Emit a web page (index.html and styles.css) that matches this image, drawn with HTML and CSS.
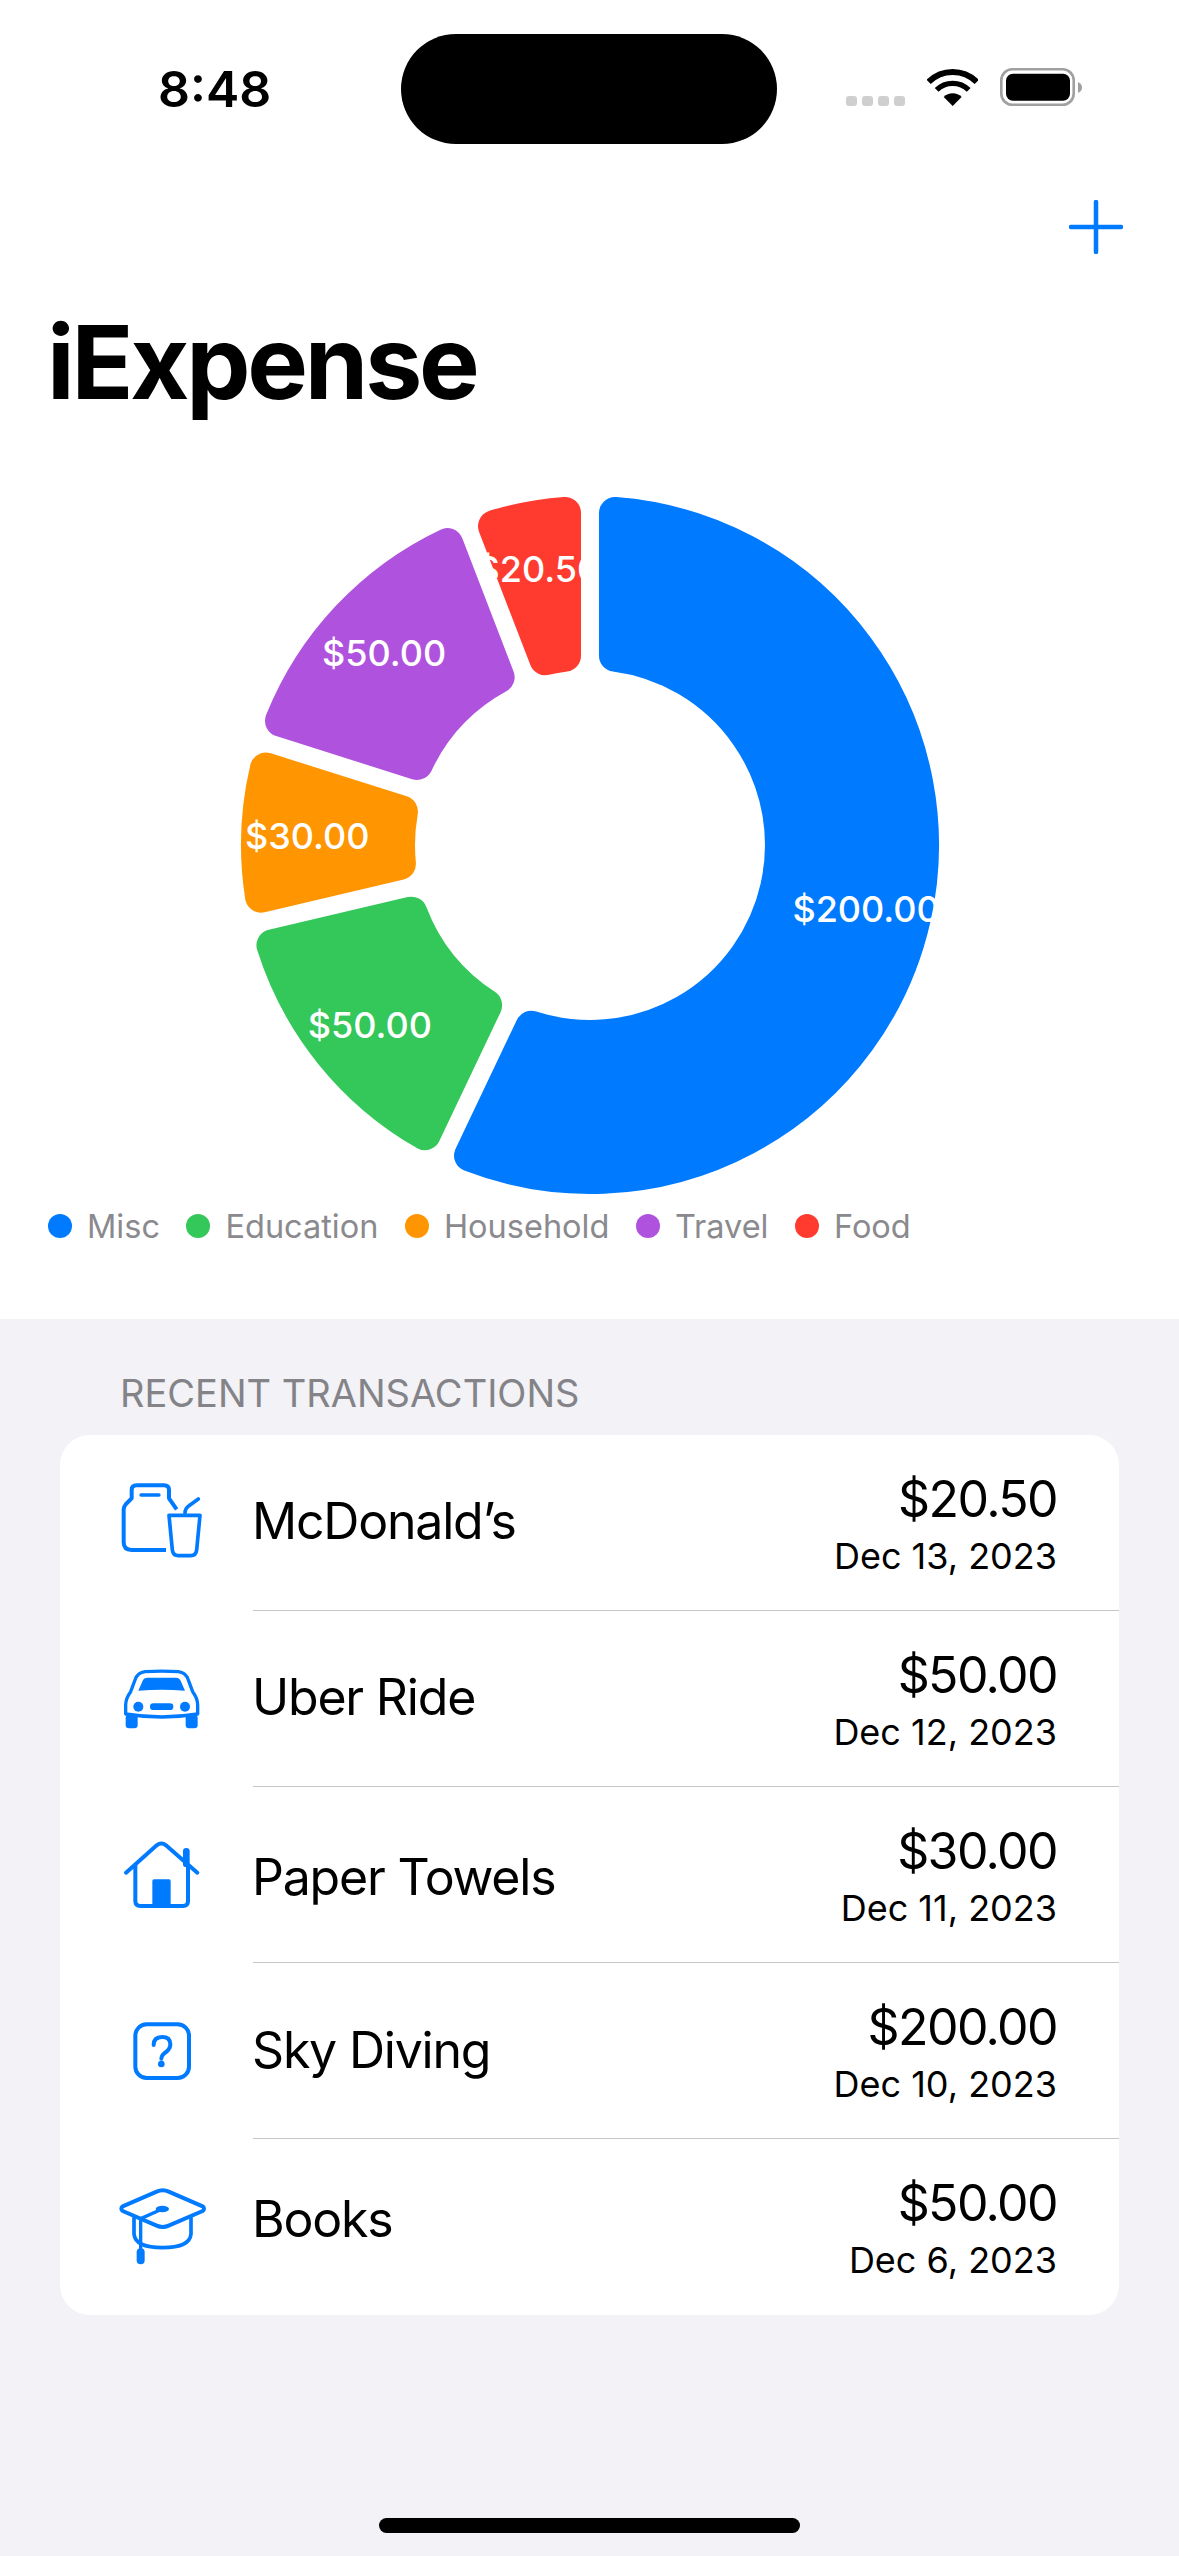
FILE: index.html
```html
<!DOCTYPE html>
<html>
<head>
<meta charset="utf-8">
<title>iExpense</title>
<link rel="stylesheet" href="styles.css">
</head>
<body>
  <div id="page">
    <div class="top">
      <div class="status">
        <span class="time">8:48</span>
        <div class="island"></div>
        <div class="status-icons">
          <div class="signal"><i></i><i></i><i></i><i></i></div>
          <svg class="wifi" viewBox="378 87 153 111">
            <path d="M382.9 125.9A102 102 0 0 1 527.1 125.9" fill="none" stroke="#000" stroke-width="18"/>
            <path d="M406.9 149.9A68 68 0 0 1 503.1 149.9" fill="none" stroke="#000" stroke-width="16"/>
            <path d="M455 198L428.1 171.1A38 38 0 0 1 481.9 171.1Z" fill="#000"/>
          </svg>
          <svg class="battery" viewBox="0 0 82 38">
            <rect x="1.3" y="1.3" width="72.4" height="35.4" rx="11" fill="none" stroke="#a0a0a0" stroke-width="2.6"/>
            <rect x="6" y="5.7" width="64" height="27" rx="7" fill="#000"/>
            <path d="M78 14C81 15.500 82 17 82 19.500C82 22 81 23.500 78 25Z" fill="#a0a0a0"/>
          </svg>
        </div>
      </div>

      <div class="nav">
        <svg class="plus" viewBox="0 0 54 54">
          <path d="M27 2V52M2 27H52" fill="none" stroke="#007aff" stroke-width="4.500" stroke-linecap="round"/>
        </svg>
      </div>

      <h1 class="title">iExpense</h1>

      <svg class="donut" viewBox="-590 -360 1179 720">
        <path class="slice misc" d="M25 -332.06A333 333 0 1 1 -119.96 310.64L-58.7 181.76A191 191 0 1 0 25 -189.36Z"/>
        <path class="slice education" d="M-165.12 289.18A333 333 0 0 1 -317.54 100.29L-178.61 67.66A191 191 0 0 0 -103.88 160.28Z"/>
        <path class="slice household" d="M-328.97 51.63A333 333 0 0 1 -324.09 -76.51L-188.06 -33.39A191 191 0 0 0 -190.05 18.98Z"/>
        <path class="slice travel" d="M-308.98 -124.18A333 333 0 0 1 -142.64 -300.91L-91.37 -167.73A191 191 0 0 0 -172.95 -81.05Z"/>
        <path class="slice food" d="M-95.97 -318.87A333 333 0 0 1 -25 -332.06L-25 -189.36A191 191 0 0 0 -44.7 -185.7Z"/>
        <text class="slice-label" x="276.1" y="64.3">$200.00</text>
        <text class="slice-label" x="-220.2" y="179.8">$50.00</text>
        <text class="slice-label" x="-282.8" y="-8.8">$30.00</text>
        <text class="slice-label" x="-205.9" y="-192.1">$50.00</text>
        <text class="slice-label" x="-51.7" y="-276.2">$20.50</text>
      </svg>

      <div class="legend">
        <div class="legend-item"><span class="dot bg-misc"></span>Misc</div>
        <div class="legend-item"><span class="dot bg-education"></span>Education</div>
        <div class="legend-item"><span class="dot bg-household"></span>Household</div>
        <div class="legend-item"><span class="dot bg-travel"></span>Travel</div>
        <div class="legend-item"><span class="dot bg-food"></span>Food</div>
      </div>
    </div>

    <div class="recent">
      <div class="recent-header">RECENT TRANSACTIONS</div>

      <div class="card">
        <div class="row">
          <svg class="icon" viewBox="6 9 420 420">
            <path d="M228 300H125Q101 300 101 277V178Q101 170 108 162L125 145V120Q125 106 140 106H222Q237 106 237 120V145L260 178" fill="none" stroke="#007aff" stroke-width="12" stroke-linejoin="round"/>
            <path d="M153 135H207" fill="none" stroke="#007aff" stroke-width="10" stroke-linecap="round"/>
            <path d="M237 196H330L320 300Q318 317 302 317H265Q249 317 247 300Z" fill="none" stroke="#007aff" stroke-width="11" stroke-linejoin="round"/>
            <path d="M285 190Q285 175 297 167L325 147" fill="none" stroke="#007aff" stroke-width="11" stroke-linecap="round"/>
          </svg>
          <div class="name">McDonald’s</div>
          <div class="amount-col">
            <div class="amount">$20.50</div>
            <div class="date">Dec 13, 2023</div>
          </div>
        </div>

        <div class="row">
          <svg class="icon" viewBox="6 537 420 420">
            <path d="M107 792V765Q107 745 122 725L135 690Q143 667 165 665Q215 662 265 665Q287 667 295 690L308 725Q323 745 323 765V792Q215 810 107 792Z" fill="none" stroke="#007aff" stroke-width="10" stroke-linejoin="round"/>
            <path d="M145 722L158 692Q162 683 172 683H258Q268 683 272 692L285 722Q215 716 145 722Z" fill="#007aff"/>
            <circle cx="145" cy="770" r="15" fill="#007aff"/>
            <circle cx="285" cy="770" r="15" fill="#007aff"/>
            <rect x="180" y="760" width="70" height="20" rx="10" fill="#007aff"/>
            <rect x="107" y="795" width="36" height="40" rx="10" fill="#007aff"/>
            <rect x="287" y="795" width="36" height="40" rx="10" fill="#007aff"/>
          </svg>
          <div class="name">Uber Ride</div>
          <div class="amount-col">
            <div class="amount">$50.00</div>
            <div class="date">Dec 12, 2023</div>
          </div>
        </div>

        <div class="row">
          <svg class="icon" viewBox="6 75 420 420">
            <path d="M108 278L200 196Q214 185 228 196L322 278" fill="none" stroke="#007aff" stroke-width="12" stroke-linecap="round"/>
            <path d="M136 255V363Q136 378 151 378H279Q294 378 294 363V255" fill="none" stroke="#007aff" stroke-width="12"/>
            <path d="M289 214V252" fill="none" stroke="#007aff" stroke-width="20" stroke-linecap="round"/>
            <rect x="187" y="298" width="55" height="80" rx="5" fill="#007aff"/>
          </svg>
          <div class="name name-low">Paper Towels</div>
          <div class="amount-col">
            <div class="amount">$30.00</div>
            <div class="date">Dec 11, 2023</div>
          </div>
        </div>

        <div class="row">
          <svg class="icon" viewBox="6 3 420 420">
            <rect x="136" y="133" width="161" height="161" rx="34" fill="none" stroke="#007aff" stroke-width="12"/>
            <path d="M191 195Q191 171 216 171Q241 171 241 193Q241 207 228 216Q214 226 214 236" fill="none" stroke="#007aff" stroke-width="12" stroke-linecap="round"/>
            <circle cx="214" cy="252" r="10" fill="#007aff"/>
          </svg>
          <div class="name name-nudge">Sky Diving</div>
          <div class="amount-col">
            <div class="amount">$200.00</div>
            <div class="date">Dec 10, 2023</div>
          </div>
        </div>

        <div class="row">
          <svg class="icon" viewBox="6 531 420 420">
            <path d="M98 679L200 635Q218 627 236 635L338 679Q346 686 338 693L236 737Q218 745 200 737L98 693Q90 686 98 679Z" fill="none" stroke="#007aff" stroke-width="12" stroke-linejoin="round"/>
            <path d="M132 712V762Q136 803 218 803Q299 803 303 762V712" fill="none" stroke="#007aff" stroke-width="11"/>
            <path d="M215 688L152 716V810" fill="none" stroke="#007aff" stroke-width="10"/>
            <ellipse cx="217" cy="687" rx="20" ry="10" fill="#007aff"/>
            <rect x="140" y="805" width="24" height="48" rx="12" fill="#007aff"/>
          </svg>
          <div class="name name-high">Books</div>
          <div class="amount-col">
            <div class="amount">$50.00</div>
            <div class="date">Dec 6, 2023</div>
          </div>
        </div>
      </div>

      <div class="home-bar"></div>
    </div>
  </div>
</body>
</html>
```

FILE: styles.css
```css
* {
  box-sizing: border-box;
}

body {
  font-family: Inter, "Liberation Sans", sans-serif;
  background-color: #f2f2f7;
  color: #000;
  margin: 0;
  padding: 0;
}

#page {
  width: 1179px;
  height: 2556px;
  display: flex;
  flex-direction: column;
  overflow: hidden;
}

.top {
  height: 1319px;
  background-color: #fff;
}

/* status bar */
.status {
  display: flex;
  align-items: center;
  height: 110px;
  margin-top: 34px;
  padding-left: 158px;
}

.time {
  width: 243px;
  font-size: 50px;
  font-weight: 600;
}

.island {
  width: 376px;
  height: 110px;
  background-color: #000;
  border-radius: 55px;
}

.status-icons {
  display: flex;
  align-items: flex-end;
  gap: 22px;
  align-self: flex-start;
  margin-left: 69px;
  padding-top: 34px;
  height: 72px;
}

.signal {
  display: flex;
  gap: 5px;
}

.signal i {
  width: 11px;
  height: 10px;
  background-color: #cfcfcf;
  border-radius: 3px;
}

.wifi {
  width: 51px;
  height: 37px;
}

.battery {
  width: 82px;
  height: 38px;
}

/* nav */
.nav {
  display: flex;
  justify-content: flex-end;
  padding: 56px 56px 0 0;
}

.plus {
  width: 54px;
  height: 54px;
}

.title {
  font-size: 102px;
  line-height: 124px;
  font-weight: 700;
  letter-spacing: -3.2px;
  margin: 46px 0 0 47px;
}

/* chart */
.donut {
  display: block;
  width: 1179px;
  height: 720px;
  margin-top: 61px;
}

.slice {
  stroke-width: 32;
  stroke-linejoin: round;
}

.misc { fill: #007aff; stroke: #007aff; }
.education { fill: #34c759; stroke: #34c759; }
.household { fill: #ff9500; stroke: #ff9500; }
.travel { fill: #af52de; stroke: #af52de; }
.food { fill: #ff3b30; stroke: #ff3b30; }

.bg-misc { background-color: #007aff; }
.bg-education { background-color: #34c759; }
.bg-household { background-color: #ff9500; }
.bg-travel { background-color: #af52de; }
.bg-food { background-color: #ff3b30; }

.slice-label {
  fill: #fff;
  font-size: 36px;
  font-weight: 500;
  text-anchor: middle;
  dominant-baseline: central;
}

.legend {
  display: flex;
  align-items: center;
  gap: 26.500px;
  height: 24px;
  margin-top: 9px;
  padding-left: 48px;
  font-size: 32.500px;
  color: #8a8a8e;
}

.legend-item {
  display: flex;
  align-items: center;
  gap: 15px;
}

.dot {
  width: 24px;
  height: 24px;
  border-radius: 50%;
}

/* list */
.recent {
  flex: 1;
  display: flex;
  flex-direction: column;
}

.recent-header {
  font-size: 38px;
  line-height: 46px;
  color: #838388;
  margin: 51px 0 0 120px;
  height: 65px;
}

.card {
  width: 1059px;
  margin-left: 60px;
  background-color: #fff;
  border-radius: 30px;
}

.row {
  position: relative;
  display: flex;
  align-items: center;
  height: 176px;
  padding: 0 62px 0 32px;
}

.row + .row::before {
  content: "";
  position: absolute;
  top: -1px;
  left: 193px;
  right: 0;
  height: 1px;
  background-color: #c6c6c8;
}

.icon {
  width: 140px;
  height: 140px;
  flex-shrink: 0;
}

.name {
  flex: 1;
  margin-left: 20px;
  margin-bottom: 4px;
  font-size: 50px;
  line-height: 60px;
  letter-spacing: -1.200px;
}

.name-low { margin-top: 8px; }
.name-nudge { margin-top: 2px; }
.name-high { margin-top: -12px; }

.amount-col {
  display: flex;
  flex-direction: column;
  align-items: flex-end;
}

.amount {
  font-size: 50px;
  line-height: 60px;
  letter-spacing: -1.600px;
}

.date {
  font-size: 36px;
  line-height: 42px;
  margin-top: 6px;
}

.home-bar {
  width: 421px;
  height: 15px;
  margin: auto auto 23px;
  background-color: #000;
  border-radius: 8px;
}
```
